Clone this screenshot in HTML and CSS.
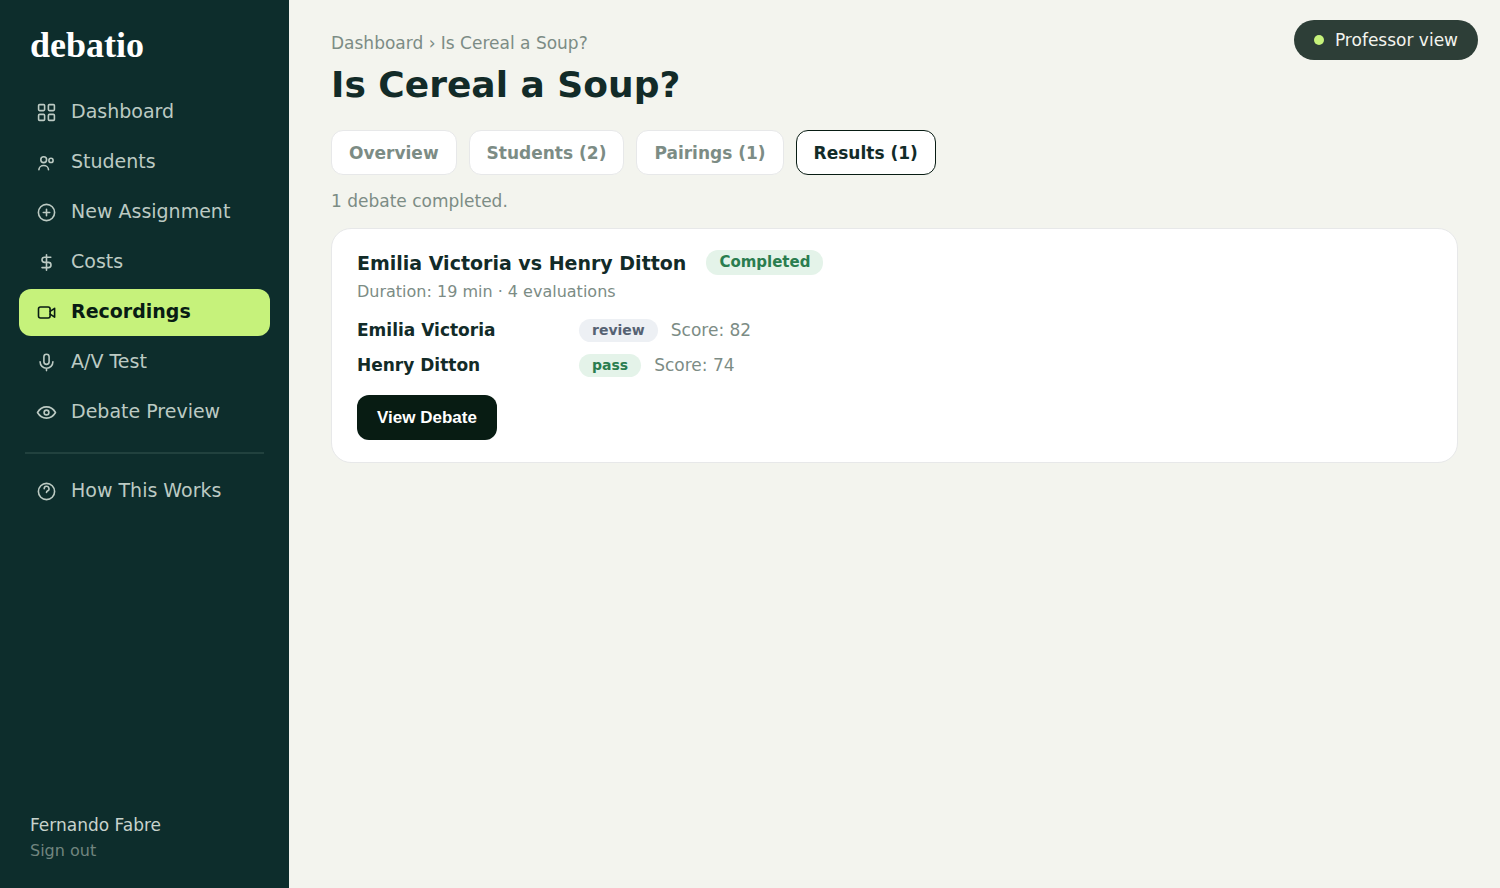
FILE: index.html
```
<!DOCTYPE html>
<html lang="en">
<head>
    <meta charset="UTF-8">
    <meta name="viewport" content="width=device-width, initial-scale=1.0">
    <title>Is Cereal a Soup? - debatio</title>
    <link rel="stylesheet" href="styles.css">
</head>
<body>
    <aside class="sidebar">
        <a href="#" class="logo">debatio</a>

        <nav class="nav">
            <a href="#" class="nav-item">
                <svg class="icon" viewBox="0 0 21 21"><rect x="2.6" y="2.6" width="6" height="6" rx="1"/><rect x="12.4" y="2.6" width="6" height="6" rx="1"/><rect x="2.6" y="12.4" width="6" height="6" rx="1"/><rect x="12.4" y="12.4" width="6" height="6" rx="1"/></svg>
                Dashboard
            </a>
            <a href="#" class="nav-item">
                <svg class="icon" viewBox="0 0 21 21"><circle cx="7.7" cy="7.7" r="2.9"/><circle cx="15" cy="8.4" r="2.1"/><path d="M2.9 17.7a4.8 4.2 0 0 1 9.6 0"/></svg>
                Students
            </a>
            <a href="#" class="nav-item">
                <svg class="icon" viewBox="0 0 21 21"><circle cx="10.5" cy="10.5" r="8.1"/><path d="M10.5 7.3v6.4M7.3 10.5h6.4"/></svg>
                New Assignment
            </a>
            <a href="#" class="nav-item">
                <svg class="icon" viewBox="0 0 21 21"><path d="M10.5 2.8v15.4M14.8 5.2H8.6a2.6 2.6 0 0 0 0 5.2h3.8a2.6 2.6 0 0 1 0 5.2H6"/></svg>
                Costs
            </a>
            <a href="#" class="nav-item active">
                <svg class="icon" viewBox="0 0 21 21"><rect x="2.5" y="5" width="11.6" height="11" rx="2"/><path d="M14.1 9.3l4.5-3v8.9l-4.5-3"/></svg>
                Recordings
            </a>
            <a href="#" class="nav-item">
                <svg class="icon" viewBox="0 0 21 21"><rect x="7.9" y="2.2" width="5.2" height="10.2" rx="2.6"/><path d="M4.1 9.8a6.4 6.4 0 0 0 12.8 0M10.5 16.2v2.4"/></svg>
                A/V Test
            </a>
            <a href="#" class="nav-item">
                <svg class="icon" viewBox="0 0 21 21"><path d="M1.5 10.5c2.2-3.7 5.2-5.6 9-5.6s6.8 1.9 9 5.6c-2.2 3.7-5.2 5.6-9 5.6s-6.8-1.9-9-5.6z"/><circle cx="10.5" cy="10.5" r="2.4"/></svg>
                Debate Preview
            </a>
            <hr class="divider">
            <a href="#" class="nav-item">
                <svg class="icon" viewBox="0 0 21 21"><circle cx="10.5" cy="10.5" r="8.1"/><path d="M8.2 7.7a2.4 2.4 0 1 1 3.5 2.1c-.8.4-1.2.9-1.2 1.7"/></svg>
                How This Works
            </a>
        </nav>

        <div class="account">
            <span class="account-name">Fernando Fabre</span>
            <a href="#" class="sign-out">Sign out</a>
        </div>
    </aside>

    <main class="content">
        <div class="breadcrumb"><a href="#">Dashboard</a> › Is Cereal a Soup?</div>
        <h1>Is Cereal a Soup?</h1>

        <div class="tabs">
            <button class="tab">Overview</button>
            <button class="tab">Students (2)</button>
            <button class="tab">Pairings (1)</button>
            <button class="tab active">Results (1)</button>
        </div>

        <p class="summary">1 debate completed.</p>

        <section class="card">
            <div class="card-head">
                <h2>Emilia Victoria vs Henry Ditton</h2>
                <span class="badge badge-lg badge-green">Completed</span>
            </div>
            <p class="meta">Duration: 19 min · 4 evaluations</p>

            <div class="scores">
                <div class="score-row">
                    <strong class="name">Emilia Victoria</strong>
                    <span class="badge badge-gray">review</span>
                    <span class="score">Score: 82</span>
                </div>
                <div class="score-row">
                    <strong class="name">Henry Ditton</strong>
                    <span class="badge badge-green">pass</span>
                    <span class="score">Score: 74</span>
                </div>
            </div>

            <button class="btn-primary">View Debate</button>
        </section>
    </main>

    <div class="role-pill"><span class="dot"></span>Professor view</div>
</body>
</html>
```
FILE: styles.css
```
:root {
    --bg: #f3f4ee;
    --sidebar: #0d2d2c;
    --lime: #c6f27b;
    --ink: #122b28;
    --dark: #081c13;
    --muted: #7c8c85;
    --nav-text: #bccac3;
    --border: #e7e8e9;
}

* {
    margin: 0;
    padding: 0;
    box-sizing: border-box;
}

body {
    display: flex;
    min-height: 100vh;
    background: var(--bg);
    color: var(--ink);
    font-family: "DejaVu Sans", sans-serif;
    font-size: 17px;
    line-height: 24px;
}

a {
    color: inherit;
    text-decoration: none;
}

/* Sidebar */
.sidebar {
    display: flex;
    flex-direction: column;
    flex-shrink: 0;
    width: 289px;
    padding: 25px 19px;
    background: var(--sidebar);
    color: var(--nav-text);
}

.logo {
    padding-left: 11px;
    margin-bottom: 24px;
    color: #fff;
    font-family: "Liberation Serif", serif;
    font-size: 36px;
    font-weight: bold;
    line-height: 40px;
}

.nav {
    display: flex;
    flex-direction: column;
    gap: 3px;
}

.nav-item {
    display: flex;
    align-items: center;
    gap: 14px;
    height: 47px;
    padding: 0 17px 3px;
    border-radius: 12px;
    font-size: 19px;
}

.nav-item.active {
    background: var(--lime);
    color: var(--dark);
    font-weight: bold;
}

.icon {
    width: 21px;
    height: 21px;
    margin-top: 3px;
    fill: none;
    stroke: currentColor;
    stroke-width: 1.6;
    stroke-linecap: round;
    stroke-linejoin: round;
}

.divider {
    height: 2px;
    margin: 13px 6px 11px;
    border: none;
    background: #21413e;
}

.account {
    display: flex;
    flex-direction: column;
    margin-top: auto;
    padding-left: 11px;
    line-height: 25px;
}

.account-name {
    color: #c8d3cd;
}

.sign-out {
    color: #71857f;
    font-size: 16px;
}

/* Main content */
.content {
    flex: 1;
    padding: 31px 42px;
}

.breadcrumb,
.summary {
    color: var(--muted);
}

h1 {
    margin: 8px 0 23px;
    font-size: 36px;
    line-height: 44px;
}

.tabs {
    display: flex;
    gap: 12px;
    margin-bottom: 14px;
}

.tab {
    height: 45px;
    padding: 0 17px;
    border: 1px solid var(--border);
    border-radius: 12px;
    background: #fff;
    color: var(--muted);
    font: bold 17px "DejaVu Sans", sans-serif;
    cursor: pointer;
}

.tab.active {
    border-color: var(--dark);
    color: var(--ink);
}

.card {
    margin-top: 15px;
    padding: 21px 25px 22px;
    border: 1px solid var(--border);
    border-radius: 20px;
    background: #fff;
}

.card-head {
    display: flex;
    align-items: center;
    gap: 20px;
}

h2 {
    font-size: 19px;
    line-height: 24px;
}

.badge {
    padding: 0 13px;
    border-radius: 12px;
    font-size: 14px;
    font-weight: bold;
    line-height: 23px;
}

.badge-lg {
    font-size: 15px;
    line-height: 25px;
}

.badge-green {
    background: #e4f3e9;
    color: #2a7d4f;
}

.badge-gray {
    background: #edf0f4;
    color: #566273;
}

.meta {
    margin-top: 5px;
    color: var(--muted);
    font-size: 16px;
}

.scores {
    display: flex;
    flex-direction: column;
    gap: 11px;
    margin: 14px 0 18px;
}

.score-row {
    display: flex;
    align-items: center;
}

.name {
    width: 222px;
}

.score {
    margin-left: 13px;
    color: var(--muted);
}

.btn-primary {
    height: 45px;
    padding: 0 20px;
    border: none;
    border-radius: 12px;
    background: var(--dark);
    color: #fff;
    font: bold 17px "Liberation Sans", sans-serif;
    cursor: pointer;
}

.role-pill {
    position: fixed;
    top: 20px;
    right: 22px;
    display: flex;
    align-items: center;
    gap: 11px;
    padding: 8px 20px;
    border-radius: 20px;
    background: #2d3e37;
    color: #f3f4ee;
}

.dot {
    width: 10px;
    height: 10px;
    border-radius: 50%;
    background: var(--lime);
}
```
